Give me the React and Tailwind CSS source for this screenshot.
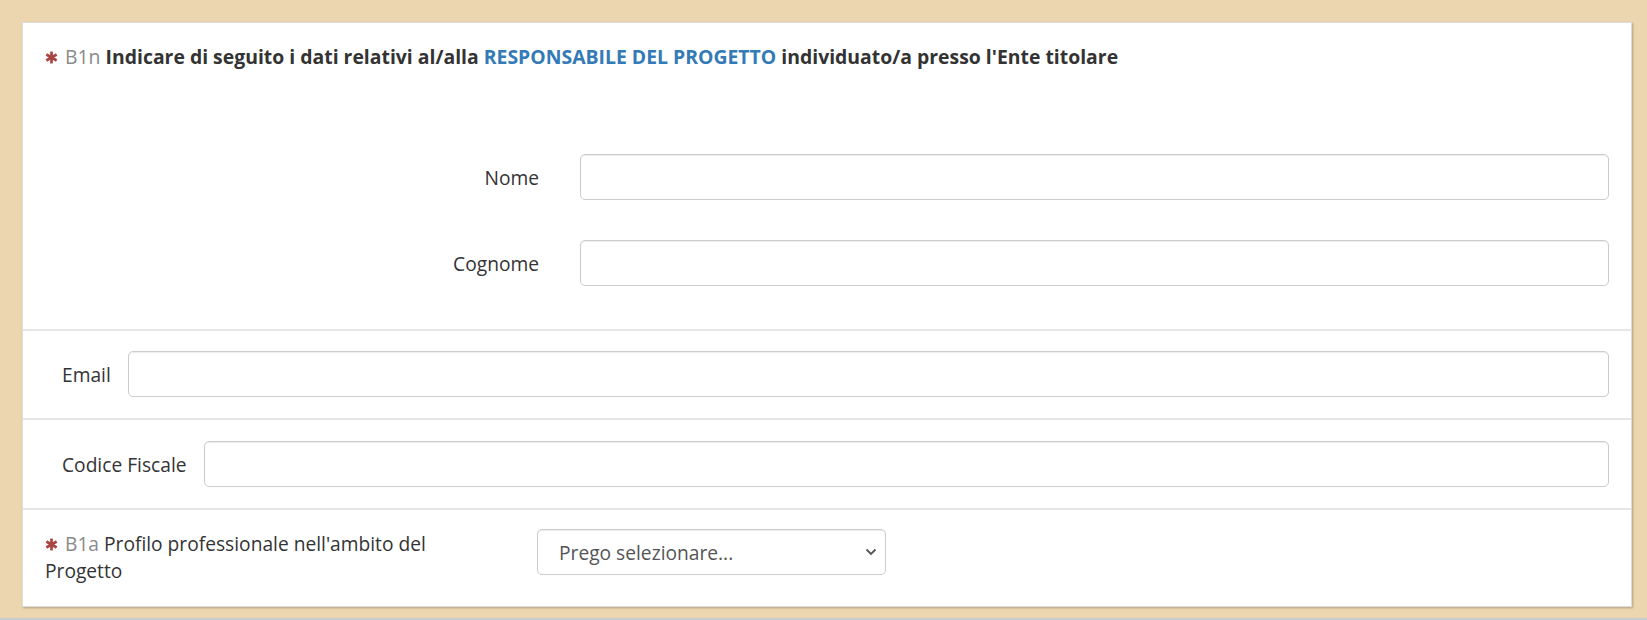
import React from 'react'

const FONT = { fontFamily: '"Open Sans", "Noto Sans", sans-serif' }

function Star() {
  return (
    <svg width="13" height="13" viewBox="0 0 24 24" className="inline-block mr-[7px] -mt-[3px]">
      <g stroke="#a94442" strokeWidth="5" strokeLinecap="butt">
        <line x1="12" y1="1" x2="12" y2="23" />
        <line x1="2.5" y1="6.5" x2="21.5" y2="17.5" />
        <line x1="2.5" y1="17.5" x2="21.5" y2="6.5" />
      </g>
    </svg>
  )
}

function TextInput({ className = '' }) {
  return (
    <input
      type="text"
      className={`h-[46px] rounded-[5px] border border-[#cccccc] bg-white shadow-[inset_0_1px_1px_rgba(0,0,0,0.075)] outline-none ${className}`}
    />
  )
}

export default function App() {
  return (
    <div style={FONT} className="h-[620px] bg-[#ecd6af] border-b-2 border-[#c8ccd0] pl-[22px] pr-[15px] pt-[22px]">
      <div className="bg-white border border-[#dcdcdc] shadow-[1px_1px_2px_rgba(0,0,0,0.25)] text-[19.2px] leading-[27px] text-[#333333]">
        {/* intestazione + nome/cognome */}
        <div className="px-[22px] pt-[20px] pb-[42px] h-[306px]">
          <div className="font-bold text-[19.4px]">
            <Star />
            <span className="font-normal text-[#8a8a8a]">B1n</span>{' '}
            Indicare di seguito i dati relativi al/alla{' '}
            <span className="text-[#337ab7]">RESPONSABILE DEL PROGETTO</span>{' '}
            individuato/a presso l'Ente titolare
          </div>
          <div className="mt-[84px] flex flex-col gap-[40px]">
            <div className="flex items-center">
              <label className="w-[535px] pr-[41px] text-right">Nome</label>
              <TextInput className="flex-1" />
            </div>
            <div className="flex items-center">
              <label className="w-[535px] pr-[41px] text-right">Cognome</label>
              <TextInput className="flex-1" />
            </div>
          </div>
        </div>

        <div className="border-t-2 border-[#e6e6e6] px-[22px] pt-[20px] pb-[21px] flex items-center">
          <label className="pl-[17px] pr-[17px]">Email</label>
          <TextInput className="flex-1" />
        </div>

        <div className="border-t-2 border-[#e6e6e6] px-[22px] pt-[21px] pb-[21px] flex items-center">
          <label className="pl-[17px] pr-[17px]">Codice Fiscale</label>
          <TextInput className="flex-1" />
        </div>

        <div className="border-t-2 border-[#e6e6e6] px-[22px] pt-[19px] pb-[22px] flex items-start">
          <label className="w-[440px] pt-[1px]">
            <Star />
            <span className="text-[#8a8a8a]">B1a</span> Profilo professionale nell'ambito del Progetto
          </label>
          <div className="relative ml-[52px] w-[349px]">
            <select className="w-full h-[46px] appearance-none rounded-[5px] border border-[#cccccc] bg-white pl-[21px] pr-[40px] text-[19.2px] text-[#555555] shadow-[inset_0_1px_1px_rgba(0,0,0,0.075)] outline-none" style={FONT}>
              <option>Prego selezionare...</option>
            </select>
            <svg width="12" height="8" viewBox="0 0 12 8" className="absolute right-[9px] top-[19px] pointer-events-none">
              <path d="M1.5 1.5 L6 6 L10.5 1.5" fill="none" stroke="#555" strokeWidth="1.8" />
            </svg>
          </div>
        </div>
      </div>
    </div>
  )
}
